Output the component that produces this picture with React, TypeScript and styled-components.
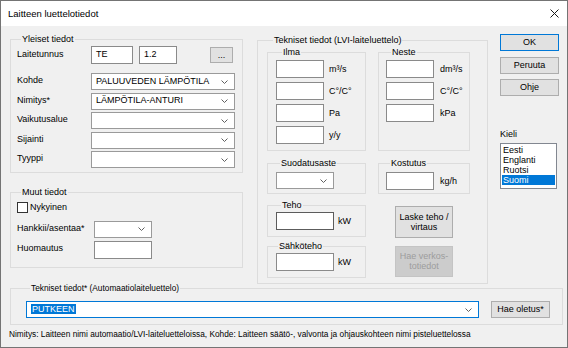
import React from "react";
import styled, { createGlobalStyle } from "styled-components";

const FONT = `"Liberation Sans", Arial, sans-serif`;

const Global = createGlobalStyle`
  html, body { margin: 0; padding: 0; background: #ffffff; }
  body { font-family: ${FONT}; font-size: 9px; color: #000; }
  * { box-sizing: border-box; }
`;

const Window = styled.div`
  width: 568px;
  height: 348px;
  border: 1px solid #747474;
  display: flex;
  flex-direction: column;
  background: #f0f0f0;
  overflow: hidden;
`;

const TitleBar = styled.div`
  height: 25px;
  background: #ffffff;
  display: flex;
  align-items: center;
  justify-content: space-between;
  padding: 0 8px 0 7px;
  font-size: 9.5px;
  flex-shrink: 0;
`;

const Body = styled.div`
  flex: 1;
  display: flex;
  flex-direction: column;
  padding: 8px 4px 0 9px;
`;

const TopRow = styled.div`
  display: flex;
  align-items: flex-start;
`;

const LeftColumn = styled.div`
  width: 233px;
  display: flex;
  flex-direction: column;
  gap: 14px;
`;

const Group = styled.fieldset<{ $pad: string; $w?: number }>`
  margin: 0;
  min-width: 0;
  border: 1px solid #dcdcdc;
  padding: ${(p) => p.$pad};
  ${(p) => (p.$w ? `width: ${p.$w}px; flex-shrink: 0;` : "")}
`;

const Legend = styled.legend<{ $ml?: number; $small?: boolean }>`
  padding: 0 1px;
  margin-left: ${(p) => p.$ml ?? 4}px;
  line-height: 11px;
  font-size: ${(p) => (p.$small ? 8.3 : 9)}px;
`;

const FormGrid = styled.div<{ $label: number; $gap: number }>`
  display: grid;
  grid-template-columns: ${(p) => p.$label}px 1fr;
  row-gap: ${(p) => p.$gap}px;
  align-items: center;
`;

const Label = styled.span`
  line-height: 11px;
  padding-bottom: 2px;
  white-space: nowrap;
`;

const IdRow = styled.div`
  display: flex;
  align-items: center;
  gap: 6px;
  margin-bottom: 6.5px;
`;

const TextBox = styled.div<{ $w?: number; $h?: number; $dark?: boolean }>`
  width: ${(p) => (p.$w ? `${p.$w}px` : "100%")};
  height: ${(p) => p.$h ?? 18}px;
  background: #ffffff;
  border: 1px solid ${(p) => (p.$dark ? "#5c5c5c" : "#8a8a8a")};
  display: flex;
  align-items: center;
  padding: 0 4px;
  line-height: 11px;
  flex-shrink: 0;
  padding-bottom: 2px;
`;

const Combo = styled.div<{ $w?: number; $focus?: boolean }>`
  width: ${(p) => (p.$w ? `${p.$w}px` : "100%")};
  height: 17px;
  background: #ffffff;
  border: 1px solid ${(p) => (p.$focus ? "#0078d7" : "#9a9a9a")};
  display: flex;
  align-items: center;
  justify-content: space-between;
  padding: 0 6px 0 4px;
  line-height: 11px;
  flex-shrink: 0;
`;

const ComboText = styled.span`
  padding-bottom: 1px;
  white-space: nowrap;
`;

const Selected = styled.span`
  background: #0078d7;
  color: #ffffff;
  padding: 0 1px;
  line-height: 11px;
`;

const Button = styled.div<{ $w: number; $h?: number; $default?: boolean; $disabled?: boolean; $ml?: number }>`
  width: ${(p) => p.$w}px;
  height: ${(p) => p.$h ?? 17}px;
  margin-left: ${(p) => p.$ml ?? 0}px;
  background: ${(p) => (p.$disabled ? "#cccccc" : "#e1e1e1")};
  color: ${(p) => (p.$disabled ? "#9c9c9c" : "#000000")};
  border: 1px solid ${(p) => (p.$default ? "#0078d7" : p.$disabled ? "#c4c4c4" : "#adadad")};
  display: flex;
  align-items: center;
  justify-content: center;
  text-align: center;
  line-height: 10px;
  flex-shrink: 0;
  padding-bottom: 1px;
`;

const CheckRow = styled.label`
  display: flex;
  align-items: center;
  gap: 2px;
  height: 13px;
  margin-bottom: 6.5px;
  line-height: 11px;
`;

const CheckBox = styled.span`
  width: 11px;
  height: 11px;
  border: 1px solid #333333;
  background: #ffffff;
  flex-shrink: 0;
`;

const MiddleGroupWrap = styled.div`
  width: 231px;
  margin-left: 14px;
  margin-top: 1px;
  flex-shrink: 0;
`;

const MidGrid = styled.div`
  display: grid;
  grid-template-columns: 99px 92px;
  column-gap: 12px;
  align-items: stretch;
`;

const MidCell = styled.div<{ $mt?: number }>`
  display: flex;
  flex-direction: column;
  margin-top: ${(p) => p.$mt ?? 0}px;
`;

const UnitList = styled.div`
  display: flex;
  flex-direction: column;
  gap: 4px;
`;

const UnitRow = styled.div<{ $gap?: number }>`
  display: flex;
  align-items: center;
  gap: ${(p) => p.$gap ?? 5}px;
  line-height: 11px;
`;

const ButtonStack = styled.div`
  display: flex;
  flex-direction: column;
  gap: 8px;
  padding: 6px 0 0 17px;
`;

const RightColumn = styled.div`
  width: 59px;
  margin-left: 12px;
  display: flex;
  flex-direction: column;
  flex-shrink: 0;
`;

const RightButtons = styled.div`
  display: flex;
  flex-direction: column;
  gap: 5.5px;
`;

const KieliLabel = styled.div`
  margin-top: 33px;
  line-height: 11px;
  margin-bottom: 3px;
`;

const ListBox = styled.div`
  width: 57px;
  height: 46px;
  border: 1px solid #828790;
  background: #ffffff;
  padding: 1px;
  display: flex;
  flex-direction: column;
`;

const ListItem = styled.div<{ $sel?: boolean }>`
  height: 10px;
  line-height: 10px;
  padding-left: 1px;
  background: ${(p) => (p.$sel ? "#0078d7" : "transparent")};
  color: ${(p) => (p.$sel ? "#ffffff" : "#000000")};
`;

const BottomGroupWrap = styled.div`
  margin-top: -1px;
`;

const BottomRow = styled.div`
  display: flex;
  align-items: center;
  gap: 12px;
`;

const Footer = styled.div`
  margin-top: 3.5px;
  margin-left: -1px;
  line-height: 11px;
  font-size: 8.3px;
  white-space: nowrap;
`;

const Chevron: React.FC = () => (
  <svg width="7" height="4" viewBox="0 0 7 4" style={{ flexShrink: 0 }}>
    <polyline points="0.5,0.5 3.5,3.5 6.5,0.5" fill="none" stroke="#606060" strokeWidth="1" />
  </svg>
);

const CloseIcon: React.FC = () => (
  <svg width="9" height="9" viewBox="0 0 9 9">
    <path d="M0.5 0.5 L8.5 8.5 M8.5 0.5 L0.5 8.5" stroke="#1a1a1a" strokeWidth="1" />
  </svg>
);

const ComboBox: React.FC<{ value?: string; w?: number; focus?: boolean; selected?: boolean }> = ({ value, w, focus, selected }) => (
  <Combo $w={w} $focus={focus}>
    <ComboText>{selected && value ? <Selected>{value}</Selected> : value}</ComboText>
    <Chevron />
  </Combo>
);

export default function App() {
  return (
    <>
      <Global />
      <Window>
        <TitleBar>
          <span>Laitteen luettelotiedot</span>
          <CloseIcon />
        </TitleBar>
        <Body>
          <TopRow>
            <LeftColumn>
              <Group $pad="1px 7px 4px 6px">
                <Legend>Yleiset tiedot</Legend>
                <FormGrid $label={74} $gap={2.5}>
                  <Label style={{ marginBottom: 6.5 }}>Laitetunnus</Label>
                  <IdRow>
                    <TextBox $w={42}>TE</TextBox>
                    <TextBox $w={38}>1.2</TextBox>
                    <Button $w={23} $h={16} $ml={27}>...</Button>
                  </IdRow>
                  <Label>Kohde</Label>
                  <ComboBox value="PALUUVEDEN LÄMPÖTILA" />
                  <Label>Nimitys*</Label>
                  <ComboBox value="LÄMPÖTILA-ANTURI" />
                  <Label>Vaikutusalue</Label>
                  <ComboBox />
                  <Label>Sijainti</Label>
                  <ComboBox />
                  <Label>Tyyppi</Label>
                  <ComboBox />
                </FormGrid>
              </Group>
              <Group $pad="3px 7px 8px 6px">
                <Legend>Muut tiedot</Legend>
                <CheckRow>
                  <CheckBox />
                  <span>Nykyinen</span>
                </CheckRow>
                <FormGrid $label={77} $gap={3}>
                  <Label>Hankkii/asentaa*</Label>
                  <ComboBox w={58} />
                  <Label>Huomautus</Label>
                  <TextBox $w={58} />
                </FormGrid>
              </Group>
            </LeftColumn>

            <MiddleGroupWrap>
              <Group $pad="1px 8px 5px 9px">
                <Legend $ml={6}>Tekniset tiedot (LVI-laiteluettelo)</Legend>
                <MidGrid>
                  <Group $pad="2px 4px 6px 8px">
                    <Legend $ml={6}>Ilma</Legend>
                    <UnitList>
                      <UnitRow><TextBox $w={48} />m³/s</UnitRow>
                      <UnitRow><TextBox $w={48} />C°/C°</UnitRow>
                      <UnitRow><TextBox $w={48} />Pa</UnitRow>
                      <UnitRow><TextBox $w={48} />y/y</UnitRow>
                    </UnitList>
                  </Group>
                  <Group $pad="2px 4px 6px 7px">
                    <Legend $ml={5}>Neste</Legend>
                    <UnitList>
                      <UnitRow $gap={6}><TextBox $w={48} />dm³/s</UnitRow>
                      <UnitRow $gap={6}><TextBox $w={48} />C°/C°</UnitRow>
                      <UnitRow $gap={6}><TextBox $w={48} />kPa</UnitRow>
                    </UnitList>
                  </Group>

                  <MidCell $mt={7}>
                    <Group $pad="3px 4px 4px 8px">
                      <Legend $ml={4}>Suodatusaste</Legend>
                      <ComboBox w={58} />
                    </Group>
                  </MidCell>
                  <MidCell $mt={7}>
                    <Group $pad="3px 4px 3px 7px">
                      <Legend $ml={4}>Kostutus</Legend>
                      <UnitRow $gap={6}><TextBox $w={48} />kg/h</UnitRow>
                    </Group>
                  </MidCell>

                  <MidCell $mt={6}>
                    <Group $pad="1px 4px 6px 8px" style={{ marginBottom: 4 }}>
                      <Legend $ml={5}>Teho</Legend>
                      <UnitRow $gap={4}><TextBox $w={58} $dark />kW</UnitRow>
                    </Group>
                    <Group $pad="1px 4px 6px 8px">
                      <Legend $ml={2}>Sähköteho</Legend>
                      <UnitRow $gap={4}><TextBox $w={58} />kW</UnitRow>
                    </Group>
                  </MidCell>
                  <MidCell $mt={6}>
                    <ButtonStack>
                      <Button $w={58} $h={32}>Laske teho /<br />virtaus</Button>
                      <Button $w={58} $h={31} $disabled>Hae verkos-<br />totiedot</Button>
                    </ButtonStack>
                  </MidCell>
                </MidGrid>
              </Group>
            </MiddleGroupWrap>

            <RightColumn>
              <RightButtons>
                <Button $w={59} $default>OK</Button>
                <Button $w={59}>Peruuta</Button>
                <Button $w={59}>Ohje</Button>
              </RightButtons>
              <KieliLabel>Kieli</KieliLabel>
              <ListBox>
                <ListItem>Eesti</ListItem>
                <ListItem>Englanti</ListItem>
                <ListItem>Ruotsi</ListItem>
                <ListItem $sel>Suomi</ListItem>
              </ListBox>
            </RightColumn>
          </TopRow>

          <BottomGroupWrap>
            <Group $pad="7px 12px 6px 15px">
              <Legend $small>Tekniset tiedot* (Automaatiolaiteluettelo)</Legend>
              <BottomRow>
                <ComboBox value="PUTKEEN" w={453} focus selected />
                <Button $w={59}>Hae oletus*</Button>
              </BottomRow>
            </Group>
          </BottomGroupWrap>

          <Footer>
            Nimitys: Laitteen nimi automaatio/LVI-laiteluetteloissa, Kohde: Laitteen säätö-, valvonta ja ohjauskohteen nimi pisteluettelossa
          </Footer>
        </Body>
      </Window>
    </>
  );
}
